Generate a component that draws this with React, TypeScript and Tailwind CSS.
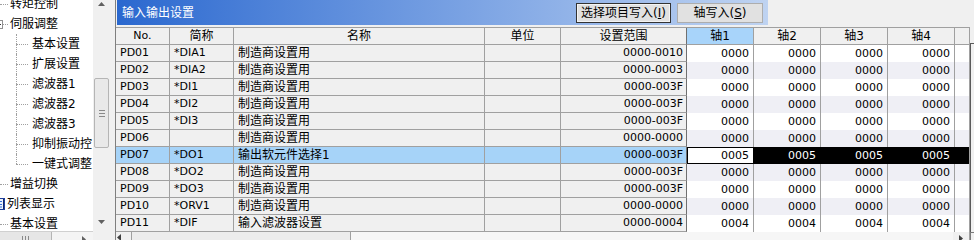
import React from "react";

type Row = { no: string; abbr: string; name: string; range: string; vals: string[] };

const cjk = (s: string) => /[\u4e00-\u9fff]/.test(s);

// Chinese text reads best at 12px, latin-only cells at 11px
const Txt = ({ s }: { s: string }) => (
  <span className={cjk(s) ? "text-[12px] leading-[16px]" : "text-[11px] leading-[16px]"}>{s}</span>
);

const zeros = ["0000", "0000", "0000", "0000"];

const rows: Row[] = [
  { no: "PD01", abbr: "*DIA1", name: "制造商设置用", range: "0000-0010", vals: zeros },
  { no: "PD02", abbr: "*DIA2", name: "制造商设置用", range: "0000-0003", vals: zeros },
  { no: "PD03", abbr: "*DI1", name: "制造商设置用", range: "0000-003F", vals: zeros },
  { no: "PD04", abbr: "*DI2", name: "制造商设置用", range: "0000-003F", vals: zeros },
  { no: "PD05", abbr: "*DI3", name: "制造商设置用", range: "0000-003F", vals: zeros },
  { no: "PD06", abbr: "", name: "制造商设置用", range: "0000-0000", vals: zeros },
  { no: "PD07", abbr: "*DO1", name: "输出软元件选择1", range: "0000-003F", vals: ["0005", "0005", "0005", "0005"] },
  { no: "PD08", abbr: "*DO2", name: "制造商设置用", range: "0000-003F", vals: zeros },
  { no: "PD09", abbr: "*DO3", name: "制造商设置用", range: "0000-003F", vals: zeros },
  { no: "PD10", abbr: "*ORV1", name: "制造商设置用", range: "0000-0000", vals: zeros },
  { no: "PD11", abbr: "*DIF", name: "输入滤波器设置", range: "0000-0004", vals: ["0004", "0004", "0004", "0004"] },
];

const fx = "shrink-0 h-full flex items-center border-r border-b border-[#a0a0a0] whitespace-nowrap overflow-hidden";
const dot = "border-dotted border-[#a0a0a0]";

const RootItem = ({ label }: { label: string }) => (
  <div className="flex items-center h-[20px] shrink-0">
    <div className={`w-[8px] border-t ${dot}`} />
    <span className="ml-[2px] text-[12px] whitespace-nowrap">{label}</span>
  </div>
);

const ChildItem = ({ label, last }: { label: string; last?: boolean }) => (
  <div className="flex h-[20px] shrink-0">
    <div className="w-[16px] shrink-0" />
    <div className="w-[12px] shrink-0 flex flex-col">
      <div className={`h-[10px] border-l ${dot}`} />
      <div className={last ? `h-[10px] border-t ${dot}` : `h-[10px] border-t border-l ${dot}`} />
    </div>
    <span className="ml-[4px] self-center text-[12px] whitespace-nowrap">{label}</span>
  </div>
);

const TreePanel = () => (
  <div className="w-[110px] h-[240px] shrink-0 flex flex-col">
    <div className="flex h-[231px] shrink-0">
      <div className="w-[93px] bg-white overflow-hidden flex flex-col">
        <div className="mt-[-6px] flex flex-col">
          <RootItem label="转矩控制" />
          <div className="flex items-center h-[20px] shrink-0">
            <div className="ml-[-6px] w-[9px] h-[9px] shrink-0 border border-[#919191] bg-white flex items-center justify-center">
              <div className="w-[5px] h-px bg-[#333]" />
            </div>
            <div className={`w-[5px] border-t ${dot}`} />
            <span className="ml-[2px] text-[12px] whitespace-nowrap">伺服调整</span>
          </div>
          <ChildItem label="基本设置" />
          <ChildItem label="扩展设置" />
          <ChildItem label="滤波器1" />
          <ChildItem label="滤波器2" />
          <ChildItem label="滤波器3" />
          <ChildItem label="抑制振动控" />
          <ChildItem label="一键式调整" last />
          <RootItem label="增益切换" />
          <div className="flex items-center h-[20px] shrink-0">
            <svg width="16" height="16" viewBox="0 0 16 16" className="ml-[-10px] shrink-0">
              <rect x="1.5" y="2.5" width="13" height="11" fill="#e8f0fc" stroke="#1f3f9a" />
              <line x1="4" y1="5.5" x2="12" y2="5.5" stroke="#3a6fd8" />
              <line x1="4" y1="8.5" x2="12" y2="8.5" stroke="#3a6fd8" />
              <line x1="4" y1="11" x2="12" y2="11" stroke="#3a6fd8" />
              <line x1="13.5" y1="3" x2="13.5" y2="13" stroke="#10256a" />
            </svg>
            <span className="ml-[1px] text-[12px] whitespace-nowrap">列表显示</span>
          </div>
          <RootItem label="基本设置" />
        </div>
      </div>
      {/* tree vertical scrollbar */}
      <div className="w-[17px] shrink-0 bg-[#f0f0f0] flex flex-col items-center">
        <svg width="7" height="4" viewBox="0 0 7 4" className="mt-[2px] shrink-0">
          <polygon points="3.5,0 7,4 0,4" fill="#606060" />
        </svg>
        <div className="h-[72px] shrink-0" />
        <div className="w-[15px] h-[70px] shrink-0 rounded-[2px] border border-[#b5b5b5] bg-[#e9e9e9] flex flex-col items-center justify-center gap-[2px]">
          <div className="w-[6px] h-px bg-[#8a8a8a]" />
          <div className="w-[6px] h-px bg-[#8a8a8a]" />
          <div className="w-[6px] h-px bg-[#8a8a8a]" />
        </div>
        <div className="flex-1" />
        <svg width="7" height="4" viewBox="0 0 7 4" className="mb-[7px] shrink-0">
          <polygon points="0,0 7,0 3.5,4" fill="#606060" />
        </svg>
      </div>
    </div>
    {/* tree horizontal scrollbar */}
    <div className="flex h-[17px] shrink-0">
      <div className="w-[93px] flex bg-[#f4f4f4] border-t border-[#d0d0d0]">
        <div className="w-[52px] h-full bg-[#e6e6e6] border-r border-[#b5b5b5] flex justify-center gap-[2px] pt-[4px]">
          <div className="w-px h-[6px] bg-[#8a8a8a]" />
          <div className="w-px h-[6px] bg-[#8a8a8a]" />
          <div className="w-px h-[6px] bg-[#8a8a8a]" />
        </div>
        <div className="flex-1" />
        <div className="w-[17px] h-full pl-[6px] pt-[4px]">
          <svg width="4" height="7" viewBox="0 0 4 7">
            <polygon points="0,0 4,3.5 0,7" fill="#606060" />
          </svg>
        </div>
      </div>
      <div className="w-[17px] bg-[#f0f0f0]" />
    </div>
  </div>
);

const Btn = ({ w, focus, label, key1 }: { w: string; focus?: boolean; label: string; key1: string }) => (
  <div
    className={`${w} h-[20px] shrink-0 flex items-center justify-center bg-[#e1e1e1] text-[12px] whitespace-nowrap ${
      focus ? "border border-[#333333] shadow-[inset_0_0_0_1px_#f4f4f4]" : "border border-[#adadad]"
    }`}
  >
    {label}(<span className="underline">{key1}</span>)
  </div>
);

const TitleBar = () => (
  <div className="flex h-[25px] shrink-0">
    <div className="ml-px w-[651px] h-full bg-linear-to-r from-[#2a68cf] to-[#bfd3f1] flex items-center">
      <span className="pl-[5px] text-white text-[12px]">输入输出设置</span>
      <div className="ml-auto mr-[5px] flex items-center gap-[6px]">
        <Btn w="w-[95px]" focus label="选择项目写入" key1="I" />
        <Btn w="w-[86px]" label="轴写入" key1="S" />
      </div>
    </div>
  </div>
);

const axisHeads = ["轴1", "轴2", "轴3", "轴4"];

const HeaderRow = () => (
  <div className="flex h-[17px] shrink-0 bg-[#f0f0f0]">
    <div className={`${fx} w-[54px] justify-center`}><Txt s="No." /></div>
    <div className={`${fx} w-[64px] justify-center`}><Txt s="简称" /></div>
    <div className={`${fx} w-[251px] justify-center`}><Txt s="名称" /></div>
    <div className={`${fx} w-[76px] justify-center`}><Txt s="单位" /></div>
    <div className={`${fx} w-[126px] justify-center border-r-[#707070]`}><Txt s="设置范围" /></div>
    {axisHeads.map((h, j) => (
      <div key={h} className={`${fx} w-[67px] justify-center ${j === 0 ? "bg-[#a8d4fa]" : ""}`}>
        <Txt s={h} />
      </div>
    ))}
    <div className={`${fx} w-[15px]`} />
  </div>
);

const GridRow = ({ r, i }: { r: Row; i: number }) => {
  const sel = r.no === "PD07";
  const fixedBg = sel ? "bg-[#a6d3f8]" : "bg-[#f0f0f0]";
  const axisBg = i % 2 === 1 ? "bg-[#efeff5]" : "bg-white";
  return (
    <div className="flex h-[17px] shrink-0">
      <div className={`${fx} ${fixedBg} w-[54px] pl-[4px]`}><Txt s={r.no} /></div>
      <div className={`${fx} ${fixedBg} w-[64px] pl-[4px]`}><Txt s={r.abbr} /></div>
      <div className={`${fx} ${fixedBg} w-[251px] pl-[4px]`}><Txt s={r.name} /></div>
      <div className={`${fx} ${fixedBg} w-[76px]`} />
      <div className={`${fx} ${fixedBg} w-[126px] justify-end pr-[3px] border-r-[#707070]`}><Txt s={r.range} /></div>
      {r.vals.map((v, j) => {
        let cls = `border-r border-[#a0a0a0] ${axisBg}`;
        if (sel && j === 0) cls = "border border-black bg-white";
        else if (sel) cls = "border-r border-black bg-black text-white";
        return (
          <div key={j} className={`shrink-0 w-[67px] h-full flex items-center justify-end pr-[4px] ${cls}`}>
            <Txt s={v} />
          </div>
        );
      })}
      <div className={`shrink-0 w-[15px] h-full border-r border-[#a0a0a0] ${sel ? "bg-black" : axisBg}`} />
    </div>
  );
};

const Grid = () => (
  <div className="flex h-[205px] shrink-0">
    <div className="w-[854px] shrink-0 flex flex-col border-t border-[#a0a0a0]">
      <HeaderRow />
      {rows.map((r, i) => (
        <GridRow key={r.no} r={r} i={i} />
      ))}
    </div>
    {/* grid vertical scrollbar, mostly off screen */}
    <div className="w-[17px] shrink-0 flex flex-col bg-[#f0f0f0]">
      <div className="h-[16px] shrink-0" />
      <div className="flex-1 border-t border-l border-[#5a5a5a] bg-[#f0f0f0]" />
    </div>
  </div>
);

const BottomScroll = () => (
  <div className="flex h-[17px] shrink-0">
    <div className="w-[854px] shrink-0 flex bg-[#f6f6f6]">
      <div className="w-[16px] h-full shrink-0 bg-[#f0f0f0] border-r border-[#a0a0a0] pl-[1px] pt-[2px]">
        <svg width="4" height="7" viewBox="0 0 4 7">
          <polygon points="4,0 0,3.5 4,7" fill="#404040" />
        </svg>
      </div>
      <div className="w-[219px] h-full shrink-0 bg-[#ececec] border-r border-[#a0a0a0]" />
      <div className="flex-1" />
      <div className="w-[17px] h-full shrink-0 bg-[#f0f0f0] border-r border-[#a0a0a0] pl-[6px] pt-[3px]">
        <svg width="4" height="7" viewBox="0 0 4 7">
          <polygon points="0,0 4,3.5 0,7" fill="#404040" />
        </svg>
      </div>
    </div>
    <div className="w-[17px] shrink-0 bg-[#f0f0f0] border-l border-t border-[#7a7a7a]" />
  </div>
);

export default function App() {
  return (
    <div className="flex w-[974px] h-[240px] overflow-hidden bg-[#f0f0f0] text-black font-['DejaVu_Sans','Noto_Sans_CJK_SC',sans-serif]">
      <TreePanel />
      <div className="w-[5px] shrink-0" />
      <div className="flex flex-col shrink-0 w-[900px] border-l border-[#7f7f7f]">
        <TitleBar />
        <div className="h-[2px] shrink-0" />
        <Grid />
        <BottomScroll />
      </div>
    </div>
  );
}
